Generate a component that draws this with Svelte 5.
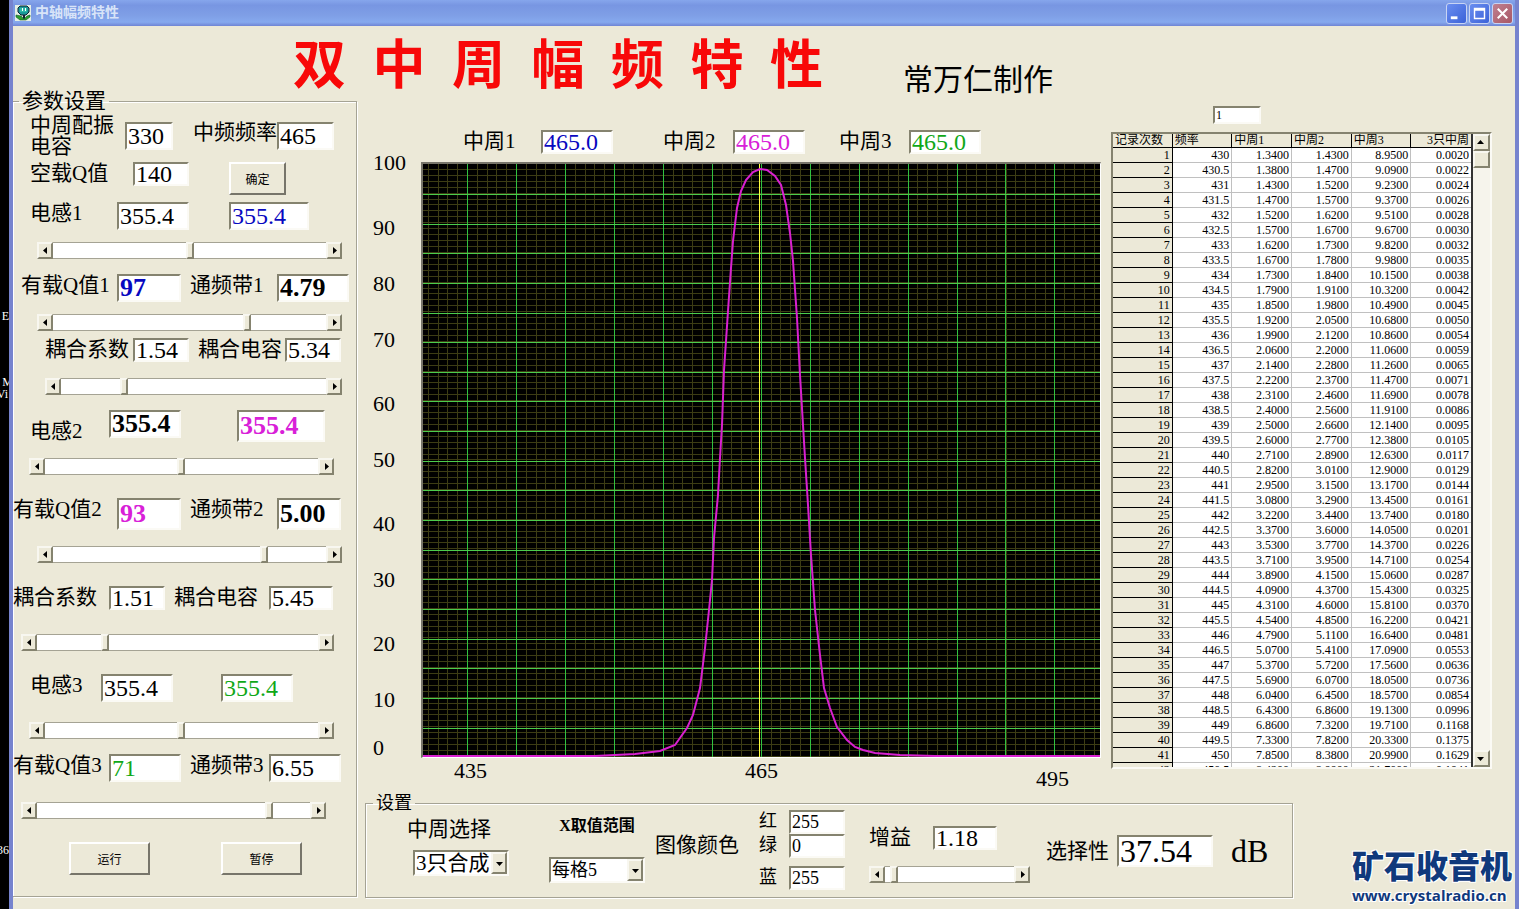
<script lang="ts">
  const rows: string[][] = [
    ['430', '1.3400', '1.4300', '8.9500', '0.0020'],
    ['430.5', '1.3800', '1.4700', '9.0900', '0.0022'],
    ['431', '1.4300', '1.5200', '9.2300', '0.0024'],
    ['431.5', '1.4700', '1.5700', '9.3700', '0.0026'],
    ['432', '1.5200', '1.6200', '9.5100', '0.0028'],
    ['432.5', '1.5700', '1.6700', '9.6700', '0.0030'],
    ['433', '1.6200', '1.7300', '9.8200', '0.0032'],
    ['433.5', '1.6700', '1.7800', '9.9800', '0.0035'],
    ['434', '1.7300', '1.8400', '10.1500', '0.0038'],
    ['434.5', '1.7900', '1.9100', '10.3200', '0.0042'],
    ['435', '1.8500', '1.9800', '10.4900', '0.0045'],
    ['435.5', '1.9200', '2.0500', '10.6800', '0.0050'],
    ['436', '1.9900', '2.1200', '10.8600', '0.0054'],
    ['436.5', '2.0600', '2.2000', '11.0600', '0.0059'],
    ['437', '2.1400', '2.2800', '11.2600', '0.0065'],
    ['437.5', '2.2200', '2.3700', '11.4700', '0.0071'],
    ['438', '2.3100', '2.4600', '11.6900', '0.0078'],
    ['438.5', '2.4000', '2.5600', '11.9100', '0.0086'],
    ['439', '2.5000', '2.6600', '12.1400', '0.0095'],
    ['439.5', '2.6000', '2.7700', '12.3800', '0.0105'],
    ['440', '2.7100', '2.8900', '12.6300', '0.0117'],
    ['440.5', '2.8200', '3.0100', '12.9000', '0.0129'],
    ['441', '2.9500', '3.1500', '13.1700', '0.0144'],
    ['441.5', '3.0800', '3.2900', '13.4500', '0.0161'],
    ['442', '3.2200', '3.4400', '13.7400', '0.0180'],
    ['442.5', '3.3700', '3.6000', '14.0500', '0.0201'],
    ['443', '3.5300', '3.7700', '14.3700', '0.0226'],
    ['443.5', '3.7100', '3.9500', '14.7100', '0.0254'],
    ['444', '3.8900', '4.1500', '15.0600', '0.0287'],
    ['444.5', '4.0900', '4.3700', '15.4300', '0.0325'],
    ['445', '4.3100', '4.6000', '15.8100', '0.0370'],
    ['445.5', '4.5400', '4.8500', '16.2200', '0.0421'],
    ['446', '4.7900', '5.1100', '16.6400', '0.0481'],
    ['446.5', '5.0700', '5.4100', '17.0900', '0.0553'],
    ['447', '5.3700', '5.7200', '17.5600', '0.0636'],
    ['447.5', '5.6900', '6.0700', '18.0500', '0.0736'],
    ['448', '6.0400', '6.4500', '18.5700', '0.0854'],
    ['448.5', '6.4300', '6.8600', '19.1300', '0.0996'],
    ['449', '6.8600', '7.3200', '19.7100', '0.1168'],
    ['449.5', '7.3300', '7.8200', '20.3300', '0.1375'],
    ['450', '7.8500', '8.3800', '20.9900', '0.1629'],
    ['450.5', '8.4200', '8.9900', '21.7000', '0.1941'],
  ];

  // plot area in svg units
  const W = 677;
  const H = 593;

  // line positions snapped to the middle of a pixel
  function lines(count: number, start: number, step: number) {
    return Array.from({ length: count }, (_, i) => Math.floor(start + i * step) + 0.5);
  }

  const minorX = lines(69, 5.4, 9.79);
  const majorX = lines(14, 44.4, 48.96);
  const minorY = lines(100, 5.4, 5.93);
  const majorY = lines(20, 30.4, 29.65);
  const yTicks = [100, 90, 80, 70, 60, 50, 40, 30, 20, 10, 0];

  const curve = [
    [0, 592], [172, 592], [212, 590], [237, 587], [252, 581], [264, 564], [270, 551], [277, 524],
    [282, 484], [286, 446], [289, 416], [291, 374], [295, 331], [297, 294], [299, 261], [301, 206],
    [303, 177], [305, 147], [308, 104], [310, 77], [314, 44], [318, 27], [323, 16], [330, 8],
    [337, 5], [344, 6], [352, 12], [358, 21], [363, 41], [367, 69], [370, 97], [374, 154],
    [377, 211], [380, 261], [382, 294], [385, 341], [388, 391], [392, 446], [397, 491], [401, 524],
    [407, 544], [414, 563], [424, 576], [432, 583], [440, 586], [452, 589], [477, 591], [512, 592], [W, 592],
  ].map((p) => p.join(',')).join(' ');
</script>

{#snippet scroller(name: string, value: number)}
  <div class="scroller">
    <button class="step" aria-label={name + ' -'}>
      <svg viewBox="0 0 12 13"><path d="M8 3v7L4 6.5z" /></svg>
    </button>
    <input type="range" min="0" max="1000" {value} aria-label={name} />
    <button class="step" aria-label={name + ' +'}>
      <svg viewBox="0 0 12 13"><path d="M5 3v7l4-3.5z" /></svg>
    </button>
  </div>
{/snippet}

<div class="desktop">
  <div class="behind">
    <span class="b1">E</span>
    <span class="b2">M</span>
    <span class="b3">Vi</span>
    <span class="b4">36</span>
  </div>

  <div class="window">
    <div class="titlebar">
      <svg class="app-icon" viewBox="0 0 16 16">
        <rect width="16" height="16" fill="#e4efe4" />
        <path d="M5 1h7l2 2v4l-3 3H6L3 7V3z" fill="#1a9a9a" stroke="#123" />
        <rect x="5" y="3" width="7" height="4" fill="#2fb9a8" />
        <path d="M7 3h1v3H7zM10 3h1v3h-1z" fill="#fff" />
        <path d="M8 10h2v5H8z" fill="#123" />
        <path d="M1 10l5 1 3 3 3-3 3-1v2l-4 3H5l-4-3z" fill="#2ca02c" stroke="#153" stroke-width=".6" />
      </svg>
      <span class="caption">中轴幅频特性</span>
      <button class="win-btn" aria-label="最小化">
        <svg viewBox="0 0 20 20"><path d="M4 13h7v3H4z" fill="#fff" /></svg>
      </button>
      <button class="win-btn" aria-label="最大化">
        <svg viewBox="0 0 20 20"><path d="M4 4h12v12H4zM5.5 7v7.5h9V7z" fill="#fff" fill-rule="evenodd" /></svg>
      </button>
      <button class="win-btn close" aria-label="关闭">
        <svg viewBox="0 0 20 20"><path d="M5 5l10 10M15 5L5 15" stroke="#fff" stroke-width="2.2" /></svg>
      </button>
    </div>

    <header>
      <h1>双  中  周  幅  频  特  性</h1>
      <p>常万仁制作</p>
    </header>

    <main>
      <fieldset class="params">
        <legend>参数设置</legend>

        <div class="row cap">
          <label for="cap">中周配振<br />电容</label>
          <input id="cap" value="330" />
          <label class="right top" for="freq">中频频率</label>
          <input id="freq" value="465" />
        </div>
        <div class="row q0">
          <label for="q0">空载Q值</label>
          <input id="q0" class="low" value="140" />
          <span></span>
          <button class="btn">确定</button>
        </div>
        <div class="row l1">
          <label for="l1">电感1</label>
          <input id="l1" value="355.4" />
          <span></span>
          <input class="blue" aria-label="电感1 计算值" value="355.4" />
        </div>
        <div class="bar s1">{@render scroller('电感1', 502)}</div>

        <div class="row q1">
          <label for="q1">有载Q值1</label>
          <input id="q1" class="blue bold" value="97" />
          <label class="next" for="bw1">通频带1</label>
          <input id="bw1" class="bold" value="4.79" />
        </div>
        <div class="bar s2">{@render scroller('有载Q值1', 717)}</div>

        <div class="row k1">
          <label for="k1">耦合系数</label>
          <input id="k1" class="low" value="1.54" />
          <label class="next" for="ck1">耦合电容</label>
          <input id="ck1" class="low" value="5.34" />
        </div>
        <div class="bar s3">{@render scroller('耦合系数1', 230)}</div>

        <div class="row l2">
          <label class="end" for="l2">电感2</label>
          <input id="l2" class="bold" value="355.4" />
          <span></span>
          <input class="pink bold tall" aria-label="电感2 计算值" value="355.4" />
        </div>
        <div class="bar s4">{@render scroller('电感2', 498)}</div>

        <div class="row q2">
          <label for="q2">有载Q值2</label>
          <input id="q2" class="pink bold tall" value="93" />
          <label class="next" for="bw2">通频带2</label>
          <input id="bw2" class="bold tall" value="5.00" />
        </div>
        <div class="bar s5">{@render scroller('有载Q值2', 781)}</div>

        <div class="row k2">
          <label for="k2">耦合系数</label>
          <input id="k2" class="low" value="1.51" />
          <label class="next" for="ck2">耦合电容</label>
          <input id="ck2" class="low" value="5.45" />
        </div>
        <div class="bar s6">{@render scroller('耦合系数2', 234)}</div>

        <div class="row l3">
          <label for="l3">电感3</label>
          <input id="l3" value="355.4" />
          <span></span>
          <input class="green" aria-label="电感3 计算值" value="355.4" />
        </div>
        <div class="bar s7">{@render scroller('电感3', 498)}</div>

        <div class="row q3">
          <label for="q3">有载Q值3</label>
          <input id="q3" class="green" value="71" />
          <label class="next" for="bw3">通频带3</label>
          <input id="bw3" value="6.55" />
        </div>
        <div class="bar s8">{@render scroller('有载Q值3', 860)}</div>

        <div class="actions">
          <button class="btn">运行</button>
          <button class="btn">暂停</button>
        </div>
      </fieldset>

      <div class="content">
        <div class="upper">
          <section class="chart">
            <div class="peaks">
              <label for="p1">中周1</label>
              <input id="p1" class="blue" value="465.0" />
              <label for="p2">中周2</label>
              <input id="p2" class="pink" value="465.0" />
              <label for="p3">中周3</label>
              <input id="p3" class="green" value="465.0" />
            </div>
            <div class="plot">
              <div class="y-axis">
                {#each yTicks as tick}
                  <span>{tick}</span>
                {/each}
              </div>
              <div class="frame">
                <svg viewBox="0 0 {W} {H}" preserveAspectRatio="none">
                  <rect width={W} height={H} fill="#000" />
                  <g shape-rendering="crispEdges">
                    {#each minorX as x}
                      <line x1={x} x2={x} y1="0" y2={H} stroke="#3c3c14" />
                    {/each}
                    {#each minorY as y}
                      <line x1="0" x2={W} y1={y} y2={y} stroke="#3c3c14" />
                    {/each}
                    {#each majorX as x}
                      <line x1={x} x2={x} y1="0" y2={H} stroke="#30c040" />
                    {/each}
                    {#each majorY as y}
                      <line x1="0" x2={W} y1={y} y2={y} stroke="#4ccc4c" />
                    {/each}
                    <line x1="336.5" x2="336.5" y1="0" y2={H} stroke="#ffff40" />
                  </g>
                  <polyline points={curve} fill="none" stroke="#d820d0" stroke-width="2" />
                </svg>
              </div>
            </div>
            <div class="x-axis">
              <span>435</span>
              <span>465</span>
              <span class="last">495</span>
            </div>
          </section>

          <section class="records">
            <input class="index" aria-label="记录" value="1" />
            <div class="grid">
              <div class="sheet">
                <table>
                  <thead>
                    <tr>
                      <th>记录次数</th>
                      <th>频率</th>
                      <th>中周1</th>
                      <th>中周2</th>
                      <th>中周3</th>
                      <th class="num">3只中周</th>
                    </tr>
                  </thead>
                  <tbody>
                    {#each rows as row, i}
                      <tr>
                        <th class="num">{i + 1}</th>
                        {#each row as cell}
                          <td>{cell}</td>
                        {/each}
                      </tr>
                    {/each}
                  </tbody>
                </table>
              </div>
              <div class="vscroll">
                <button class="step" aria-label="向上">
                  <svg viewBox="0 0 12 13"><path d="M2 8h7L5.5 4z" /></svg>
                </button>
                <div class="thumb"></div>
                <button class="step down" aria-label="向下">
                  <svg viewBox="0 0 12 13"><path d="M2 5h7L5.5 9z" /></svg>
                </button>
              </div>
            </div>
          </section>
        </div>

        <div class="lower">
          <fieldset class="settings">
            <legend>设置</legend>

            <div class="group pick">
              <label for="pick">中周选择</label>
              <div class="select">
                <select id="pick"><option>3只合成</option></select>
                <span class="arrow"><svg viewBox="0 0 12 13"><path d="M3 5h7L6.5 9z" /></svg></span>
              </div>
            </div>

            <div class="group span">
              <label for="span">X取值范围</label>
              <div class="select">
                <select id="span"><option>每格5</option></select>
                <span class="arrow"><svg viewBox="0 0 12 13"><path d="M3 5h7L6.5 9z" /></svg></span>
              </div>
            </div>

            <span class="group color-title">图像颜色</span>
            <div class="group rgb">
              <label for="red">红</label>
              <input id="red" value="255" />
              <label for="green">绿</label>
              <input id="green" value="0" />
              <label for="blue">蓝</label>
              <input id="blue" value="255" />
            </div>

            <div class="group gain">
              <div class="gain-row">
                <label for="gain">增益</label>
                <input id="gain" class="low" value="1.18" />
              </div>
              {@render scroller('增益', 41)}
            </div>

            <div class="group selectivity">
              <label for="sel">选择性</label>
              <input id="sel" value="37.54" />
              <span class="unit">dB</span>
            </div>
          </fieldset>

          <div class="logo">
            <strong>矿石收音机</strong>
            <span>www.crystalradio.cn</span>
          </div>
        </div>
      </div>
    </main>
  </div>
</div>

<style>
  :global(body) {
    margin: 0;
    background: #000;
  }

  .desktop {
    display: flex;
    min-height: 100vh;
    background: #000;
    color: #000;
    font-family: "Liberation Serif", "Noto Sans CJK SC", serif;
    font-size: 21px;
    line-height: 22px;
  }

  .desktop * {
    box-sizing: border-box;
  }

  .behind {
    position: relative;
    width: 9px;
    flex: none;
    overflow: hidden;
    color: #fff;
    font-size: 12px;
    line-height: 12px;
  }

  .behind span {
    position: absolute;
    right: 0;
  }

  .behind .b1 { top: 310px; }
  .behind .b2 { top: 376px; right: -4px; }
  .behind .b3 { top: 388px; right: 1px; }
  .behind .b4 { top: 844px; }

  .window {
    flex: 1;
    min-width: 0;
    background: #ece9d8;
    border: solid #7683ce;
    border-width: 0 4px 2px;
  }

  .titlebar {
    display: flex;
    align-items: center;
    gap: 2px;
    height: 26px;
    padding: 0 2px;
    background: linear-gradient(#86a6ec, #7896e2 20%, #7f9fe6 60%, #86a9ee 85%, #6f84d4);
  }

  .app-icon {
    width: 16px;
    height: 16px;
  }

  .caption {
    flex: 1;
    padding-left: 2px;
    color: #d8e4f8;
    font-size: 14px;
    font-weight: 700;
  }

  .win-btn {
    width: 21px;
    height: 21px;
    padding: 0;
    border: 1px solid #c8d4f4;
    border-radius: 3px;
    background: linear-gradient(135deg, #6a8ef0, #3b62d8);
  }

  .win-btn.close {
    background: linear-gradient(135deg, #c08090, #a85866);
  }

  .win-btn svg {
    display: block;
    width: 19px;
    height: 19px;
  }

  header {
    display: flex;
    align-items: flex-start;
    gap: 80px;
    height: 65px;
    padding-left: 280px;
    white-space: pre;
  }

  h1 {
    margin: 0;
    color: #f80808;
    font-size: 53px;
    font-weight: 700;
    line-height: 80px;
  }

  header p {
    margin: 0;
    font-size: 30px;
    line-height: 108px;
  }

  main {
    display: flex;
    align-items: flex-start;
  }

  fieldset {
    min-width: 0;
    margin: 0;
    padding: 0;
    border: 1px solid #a5a394;
    box-shadow: 1px 1px 0 #fff, inset 1px 1px 0 #fff;
  }

  legend {
    padding: 0 3px;
  }

  input {
    width: 100%;
    min-width: 0;
    height: 28px;
    margin: 0;
    padding: 0 1px;
    border: 2px solid;
    border-color: #85836f #fbfaf5 #fbfaf5 #85836f;
    border-radius: 0;
    background: #fff;
    color: #000;
    font: 24px "Liberation Serif", "Noto Sans CJK SC", serif;
  }

  input.low { height: 24px; }
  input.tall { height: 32px; }
  input.bold { font-size: 26px; font-weight: 700; }
  input.blue { color: #0808c0; }
  input.pink { color: #d820d8; }
  input.green { color: #10a818; }

  .btn {
    height: 33px;
    padding: 0;
    border: 2px solid;
    border-color: #fff #77756a #77756a #fff;
    background: #ece9d8;
    color: #000;
    font: 12px "Noto Sans CJK SC", sans-serif;
  }

  .params {
    width: 344px;
    flex: none;
    padding-bottom: 21px;
    border-left: none;
  }

  .params legend {
    height: 20px;
    margin-left: 6px;
    line-height: 20px;
  }

  .row {
    display: grid;
    align-items: start;
    white-space: nowrap;
  }

  .row .next { padding-left: 9px; }
  .row .right { justify-self: end; }
  .row .end { align-self: end; }

  .cap { align-items: center; margin-top: 4px; padding-left: 17px; grid-template-columns: 95px 48px 104px 57px; }
  .cap label { line-height: 21px; }
  .cap .top { align-self: start; padding-top: 7px; }
  .q0 { margin-top: 5px; padding-left: 17px; grid-template-columns: 103px 56px 40px 57px; }
  .l1 { margin-top: 7px; padding-left: 17px; grid-template-columns: 87px 72px 40px 80px; }
  .q1 { margin-top: 15px; padding-left: 8px; grid-template-columns: 96px 64px 96px 72px; }
  .k1 { margin-top: 7px; padding-left: 32px; grid-template-columns: 88px 56px 96px 56px; }
  .l2 { margin-top: 15px; padding-left: 17px; grid-template-columns: 79px 72px 56px 88px; }
  .q2 { margin-top: 23px; grid-template-columns: 104px 64px 96px 64px; }
  .k2 { margin-top: 23px; grid-template-columns: 96px 56px 104px 64px; }
  .l3 { margin-top: 23px; padding-left: 17px; grid-template-columns: 71px 72px 48px 72px; }
  .q3 { margin-top: 15px; grid-template-columns: 96px 72px 88px 72px; }

  .bar { padding: 0 14px 0 24px; }
  .s1, .s2 { margin-top: 12px; }
  .s3 { margin-top: 16px; padding-left: 32px; }
  .s4 { margin-top: 16px; padding: 0 22px 0 16px; }
  .s5 { margin-top: 16px; }
  .s6 { margin-top: 24px; padding: 0 22px 0 8px; }
  .s7 { margin-top: 20px; padding: 0 22px 0 16px; }
  .s8 { margin-top: 20px; padding: 0 30px 0 8px; }

  .actions {
    display: flex;
    gap: 71px;
    margin-top: 23px;
    padding-left: 56px;
  }

  .actions .btn { width: 81px; }

  .scroller {
    display: flex;
    height: 17px;
  }

  .step,
  .thumb,
  .arrow {
    flex: none;
    width: 16px;
    height: 17px;
    padding: 0;
    border: 2px solid;
    border-color: #f8f7f0 #85836f #85836f #f8f7f0;
    background: #ece9d8;
  }

  .step svg,
  .arrow svg {
    display: block;
    width: 12px;
    height: 13px;
  }

  .scroller input {
    flex: 1;
    height: 17px;
    padding: 0;
    border: solid #a5a394;
    border-width: 1px 0;
    appearance: none;
  }

  .scroller input::-webkit-slider-thumb {
    width: 8px;
    height: 17px;
    border: 2px solid;
    border-color: #f8f7f0 #85836f #85836f #f8f7f0;
    background: #ece9d8;
    appearance: none;
  }

  .content {
    flex: 1;
    min-width: 0;
  }

  .upper {
    display: flex;
    gap: 10px;
    height: 705px;
    padding: 0 23px 0 16px;
  }

  .chart {
    flex: 1;
    min-width: 0;
    padding-top: 39px;
  }

  .peaks {
    display: grid;
    grid-template-columns: 78px 122px 70px 106px 70px 72px;
    align-items: start;
    height: 32px;
    padding-left: 90px;
    white-space: nowrap;
  }

  .peaks input {
    width: 72px;
    height: 24px;
  }

  .plot {
    display: flex;
    height: 596px;
  }

  .y-axis {
    display: grid;
    flex: none;
    width: 48px;
    grid-template-rows: 65px 56px 56px 64px 56px 64px 56px 64px 56px 48px;
    margin-top: -10px;
    font-size: 22px;
  }

  .frame {
    flex: 1;
    min-width: 0;
    border: solid;
    border-color: #77756a #fff #fff #77756a;
    border-width: 2px 1px 1px 2px;
  }

  .frame svg {
    display: block;
    width: 100%;
    height: 100%;
  }

  .x-axis {
    display: flex;
    justify-content: space-between;
    height: 30px;
    margin-top: 2px;
    padding: 0 32px 0 81px;
    font-size: 22px;
  }

  .x-axis .last { align-self: flex-end; }

  .records {
    flex: none;
    width: 381px;
    padding-top: 15px;
  }

  .index {
    display: block;
    width: 48px;
    height: 18px;
    margin: 0 0 8px 102px;
    font-size: 12px;
  }

  .grid {
    display: flex;
    height: 637px;
    border: 2px solid;
    border-color: #85836f #fbfaf5 #fbfaf5 #85836f;
    overflow: hidden;
  }

  .sheet {
    flex: 1;
    border-right: 2px solid #333;
  }

  table {
    width: 100%;
    border-spacing: 0;
    table-layout: fixed;
    background: #fff;
    font-size: 12px;
    line-height: 14px;
  }

  th,
  td {
    height: 15px;
    padding: 0 2px;
    overflow: hidden;
    white-space: nowrap;
  }

  th {
    border-right: 1px solid #000;
    border-bottom: 1px solid #000;
    background: #ece9d8;
    font-weight: 400;
    text-align: left;
  }

  thead th {
    height: 14px;
    line-height: 13px;
  }

  td {
    border-right: 1px solid #c0c0c0;
    border-bottom: 1px solid #c0c0c0;
    text-align: right;
  }

  th:last-child,
  td:last-child {
    border-right: none;
  }

  .num { text-align: right; }

  .vscroll {
    display: flex;
    flex-direction: column;
    width: 17px;
    flex: none;
    background: #f6f4ec;
  }

  .vscroll .step,
  .vscroll .thumb {
    width: 17px;
  }

  .vscroll .down { margin-top: auto; }

  .lower {
    display: flex;
    padding-left: 8px;
  }

  .settings {
    display: flex;
    align-items: flex-start;
    flex: 1;
    height: 102px;
    white-space: nowrap;
  }

  .settings legend {
    height: 14px;
    margin-left: 7px;
    font-size: 18px;
    line-height: 14px;
  }

  .group {
    flex: none;
  }

  .group label {
    display: block;
  }

  .pick { padding: 8px 0 0 41px; }
  .span { padding: 5px 0 0 40px; text-align: center; }
  .pick .select { margin: 10px 0 0 6px; }
  .span .select { margin-top: 20px; }
  .span label { font-size: 16px; font-weight: 700; }

  .select {
    position: relative;
    width: 96px;
  }

  select {
    display: block;
    width: 100%;
    height: 26px;
    padding: 0 0 0 1px;
    border: 2px solid;
    border-color: #85836f #fbfaf5 #fbfaf5 #85836f;
    border-radius: 0;
    background: #fff;
    color: #000;
    font: 21px "Liberation Serif", "Noto Sans CJK SC", serif;
    line-height: 22px;
    appearance: none;
  }

  .span select { font-size: 18px; }

  .arrow {
    position: absolute;
    top: 2px;
    right: 2px;
    height: 22px;
    padding-top: 3px;
    pointer-events: none;
  }

  .color-title { padding: 24px 0 0 10px; }

  .rgb {
    display: grid;
    grid-template: 24px 32px 24px / 30px 56px;
    padding-left: 20px;
    font-size: 18px;
  }

  .rgb input {
    height: 24px;
    font-size: 18px;
  }

  .gain {
    width: 185px;
    padding: 16px 0 0 24px;
  }

  .gain-row {
    display: flex;
    gap: 22px;
    margin-bottom: 16px;
  }

  .gain-row input { width: 64px; }

  .selectivity {
    display: flex;
    align-items: center;
    padding: 25px 0 0 16px;
  }

  .selectivity input {
    width: 96px;
    height: 32px;
    margin-left: 8px;
    font-size: 32px;
    line-height: 28px;
  }

  .unit {
    padding-left: 18px;
    font-size: 32px;
  }

  .logo {
    width: 222px;
    flex: none;
    padding: 51px 0 0 59px;
    color: #10397c;
    text-shadow: 1px 1px 0 #fff, -1px -1px 0 #fff, 1px -1px 0 #fff, -1px 1px 0 #fff;
  }

  .logo strong,
  .logo span {
    display: block;
  }

  .logo strong {
    font: 900 32px "Noto Sans CJK SC", sans-serif;
    line-height: 34px;
  }

  .logo span {
    font: 700 15px "Open Sans", sans-serif;
    line-height: 28px;
  }
</style>
